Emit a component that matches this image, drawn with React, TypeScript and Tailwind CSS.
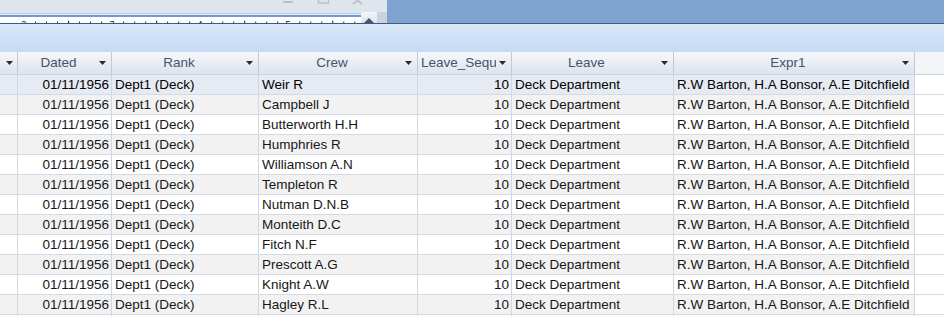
import React from "react";

/**
 * Access-style datasheet view, scrolled a little to the right,
 * with the bottom of the ribbon/ruler area visible above it.
 */

interface Column {
  key: string;
  title: string;
  width: string;
  align: "left" | "right";
  headerAlign: "center" | "left";
}

interface Record {
  dated: string;
  rank: string;
  crew: string;
  seq: number;
  leave: string;
  expr1: string;
}

const columns: Column[] = [
  { key: "prev", title: "", width: "w-[18px]", align: "left", headerAlign: "center" },
  { key: "dated", title: "Dated", width: "w-[94px]", align: "right", headerAlign: "center" },
  { key: "rank", title: "Rank", width: "w-[147px]", align: "left", headerAlign: "center" },
  { key: "crew", title: "Crew", width: "w-[159px]", align: "left", headerAlign: "center" },
  { key: "seq", title: "Leave_Sequ", width: "w-[94px]", align: "right", headerAlign: "left" },
  { key: "leave", title: "Leave", width: "w-[162px]", align: "left", headerAlign: "center" },
  { key: "expr1", title: "Expr1", width: "w-[241px]", align: "left", headerAlign: "center" },
];

const crew = [
  "Weir R",
  "Campbell J",
  "Butterworth H.H",
  "Humphries R",
  "Williamson A.N",
  "Templeton R",
  "Nutman D.N.B",
  "Monteith D.C",
  "Fitch N.F",
  "Prescott A.G",
  "Knight A.W",
  "Hagley R.L",
  "",
];

const records: Record[] = crew.map((name) => ({
  dated: "01/11/1956",
  rank: "Dept1 (Deck)",
  crew: name,
  seq: 10,
  leave: "Deck Department",
  expr1: "R.W Barton, H.A Bonsor, A.E Ditchfield",
}));

function DropArrow() {
  return (
    <svg width="7" height="4" viewBox="0 0 7 4" className="shrink-0">
      <path d="M0 0h7L3.5 4z" fill="#2b2b2b" />
    </svg>
  );
}

function WindowButtons() {
  return (
    <svg width="387" height="12" viewBox="0 0 387 12" className="block">
      <rect x="283" y="1" width="10" height="2" fill="#b9c1cc" />
      <rect x="318.5" y="-4" width="10" height="7" fill="none" stroke="#b9c1cc" strokeWidth="1.5" />
      <path d="M353 -3l9 7M362 -3l-9 7" stroke="#b9c1cc" strokeWidth="2" />
    </svg>
  );
}

function Ruler() {
  const ticks: React.ReactNode[] = [];
  for (let i = 0; i < 31; i++) {
    const x = 10 + i * 12;
    if (i % 8 === 0) {
      ticks.push(
        <text key={i} x={x - 3} y={11} fontSize="10" fontFamily="Liberation Sans, sans-serif" fill="#111">
          {2 + i / 8}
        </text>
      );
    } else {
      ticks.push(<rect key={i} x={x} y={i % 4 === 0 ? 4 : 5} width="1" height={i % 4 === 0 ? 3 : 2} fill="#111" />);
    }
  }
  return (
    <svg width="361" height="7" viewBox="0 0 361 7" className="block bg-white">
      {ticks}
    </svg>
  );
}

function TopStrip() {
  return (
    <div className="flex h-[23px]">
      <div className="flex w-[387px] flex-col bg-[#dfe5ec]">
        <div className="h-[12px]">
          <WindowButtons />
        </div>
        <div className="flex h-[11px]">
          <div className="flex w-[361px] flex-col">
            <div className="h-px bg-[#dfe5ec]" />
            <div className="h-px bg-[#b7cdec]" />
            <div className="h-px bg-[#e9f0fa]" />
            <div className="h-[2px] bg-[#6f9ad5]" />
            <Ruler />
          </div>
          <div className="flex w-[16px] items-end justify-center bg-gradient-to-b from-[#f4f6f9] to-[#dfe4ea]">
            <svg width="10" height="5" viewBox="0 0 10 5">
              <path d="M0 5L5 0l5 5z" fill="#3d5579" />
            </svg>
          </div>
          <div className="w-[10px] bg-[#c9d3e0]" />
        </div>
      </div>
      <div className="flex-1 bg-[#7fa3cf]" />
    </div>
  );
}

function HeaderRow() {
  return (
    <div className="flex h-[23px] border-b border-[#c9d2df] bg-gradient-to-b from-[#f6f8fb] to-[#dde3ec] text-[#45536a]">
      {columns.map((col) => (
        <div
          key={col.key}
          className={`flex ${col.width} shrink-0 items-center overflow-hidden border-r border-[#bfc9d8]`}
        >
          <div
            className={`flex-1 overflow-hidden whitespace-nowrap pl-[3px] ${
              col.headerAlign === "center" ? "text-center" : "text-left"
            }`}
          >
            {col.title}
          </div>
          <div className="flex w-[15px] shrink-0 justify-center pr-[2px]">
            <DropArrow />
          </div>
        </div>
      ))}
      <div className="flex-1 bg-[#f3f5f8]" />
    </div>
  );
}

function cellValue(rec: Record, key: string) {
  switch (key) {
    case "dated":
      return rec.dated;
    case "rank":
      return rec.rank;
    case "crew":
      return rec.crew;
    case "seq":
      return rec.seq;
    case "leave":
      return rec.leave;
    case "expr1":
      return rec.expr1;
    default:
      return "";
  }
}

function DataRow({ rec, index }: { rec: Record; index: number }) {
  const bg = index === 0 ? "bg-[#e6eaf2]" : index % 2 === 1 ? "bg-[#f2f2f2]" : "bg-white";
  const text = index === 0 ? "text-black" : "text-[#161616]";
  return (
    <div className="flex h-[20px] border-b border-[#d5dae3]">
      {columns.map((col) => (
        <div
          key={col.key}
          className={`${col.width} ${bg} ${text} shrink-0 overflow-hidden whitespace-nowrap border-r border-[#d0d7e4] leading-[19px] ${
            col.align === "right" ? "pr-[2px] text-right" : "pl-[3px] text-left"
          }`}
        >
          {cellValue(rec, col.key)}
        </div>
      ))}
      <div className="flex-1 bg-white" />
    </div>
  );
}

export default function App() {
  return (
    <div className="h-[316px] w-[944px] overflow-hidden bg-white font-['Liberation_Sans',sans-serif] text-[13.5px]">
      <TopStrip />
      <div className="h-px bg-[#3e5a80]" />
      <div className="h-[28px] bg-gradient-to-b from-[#dce8f8] via-[#cfe0f6] to-[#c8dbf5]" />
      <HeaderRow />
      {records.map((rec, i) => (
        <DataRow key={i} rec={rec} index={i} />
      ))}
    </div>
  );
}
